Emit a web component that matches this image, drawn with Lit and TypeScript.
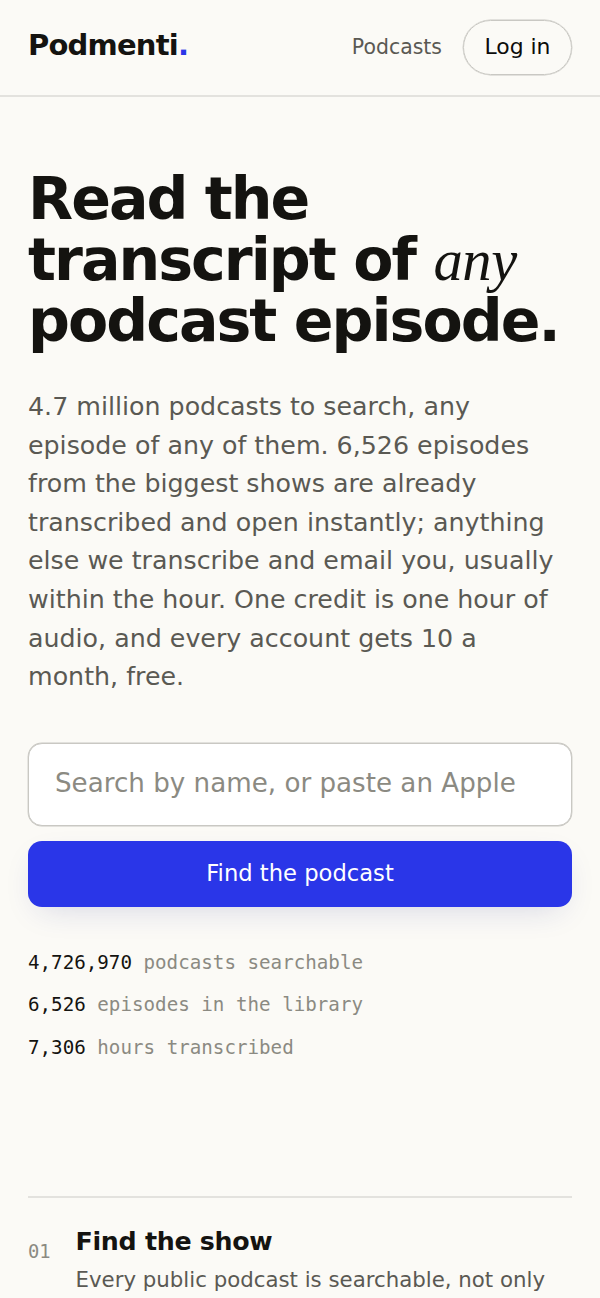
import { LitElement, html, css } from "lit";
import { customElement } from "lit/decorators.js";

@customElement("app-root")
export class AppRoot extends LitElement {
  static styles = css`
    :host { display: block; height: 1298px; overflow: hidden; background: #fbfaf6; color: #141310; font-family: "DejaVu Sans", sans-serif; }
    * { box-sizing: border-box; }
    header { height: 97px; padding: 0 28px; border-bottom: 2px solid #e3e2de; display: flex; align-items: center; }
    .logo { font-weight: 700; font-size: 29px; letter-spacing: -0.8px; flex: 1; padding-bottom: 6px; white-space: nowrap; }
    .dot { color: #2a36e8; }
    .nav { font-size: 20.45px; color: #5a5953; margin-right: 21px; padding-bottom: 2px; }
    .login { height: 55px; width: 109px; border: 1.5px solid #c9c8c3; box-shadow: 0 0 0 .4px #c9c8c3; border-radius: 28px; display: flex; align-items: center; justify-content: center; font-size: 21.9px; padding-bottom: 3px; color: #0c0c0a; }
    main { padding: 0 28px; }
    h1 { margin: 72px 0 0; font-size: 58.6px; line-height: 61px; letter-spacing: -1.99px; font-weight: 700; white-space: nowrap; }
    .any { font-family: "Liberation Serif", serif; font-weight: 400; font-style: italic; letter-spacing: -0.4px; }
    .lead { margin: 36px 0 0; font-size: 25.3px; line-height: 38.6px; color: #5a5953; white-space: nowrap; }
    .field { margin-top: 46px; height: 83px; background: #fff; border: 1.5px solid #c9c8c3; box-shadow: 0 0 0 .4px #c9c8c3; border-radius: 14px; padding: 0 26px 3px; display: flex; align-items: center; font-size: 26.16px; color: #8b8a82; white-space: nowrap; }
    .find { margin-top: 15px; height: 66.5px; border-radius: 14px; background: #2a36e8; color: #fff; display: flex; align-items: center; justify-content: center; font-size: 22.65px; padding-bottom: 2px; box-shadow: 0 11px 33px -11px rgba(30,36,140,.18); }
    .stats { margin-top: 34.5px; font-family: "DejaVu Sans Mono", monospace; font-size: 19.2px; line-height: 42.4px; color: #8b8a82; }
    .stats b { color: #141310; font-weight: 400; }
    .step { margin-top: 127px; border-top: 2px solid #e3e2de; display: flex; padding-top: 26px; }
    .num { width: 47.5px; font-family: "DejaVu Sans Mono", monospace; font-size: 18.8px; color: #8b8a82; padding-top: 17px; }
    h2 { margin: 0; font-size: 25.3px; line-height: 36px; letter-spacing: -0.3px; }
    .desc { margin: 3px 0 0; font-size: 21.3px; line-height: 34px; color: #5a5953; white-space: nowrap; }
  `;
  render() {
    return html`
      <header><div class="logo">Podmenti<span class="dot">.</span></div><div class="nav">Podcasts</div><div class="login">Log in</div></header>
      <main>
        <h1>Read the<br>transcript of <span class="any">any</span><br>podcast episode.</h1>
        <p class="lead">4.7 million podcasts to search, any<br>episode of any of them. 6,526 episodes<br>from the biggest shows are already<br>transcribed and open instantly; anything<br>else we transcribe and email you, usually<br>within the hour. One credit is one hour of<br>audio, and every account gets 10 a<br>month, free.</p>
        <div class="field">Search by name, or paste an Apple</div>
        <div class="find">Find the podcast</div>
        <div class="stats"><div><b>4,726,970</b> podcasts searchable</div><div><b>6,526</b> episodes in the library</div><div><b>7,306</b> hours transcribed</div></div>
        <section class="step"><div class="num">01</div><div><h2>Find the show</h2><p class="desc">Every public podcast is searchable, not only</p></div></section>
      </main>`;
  }
}
